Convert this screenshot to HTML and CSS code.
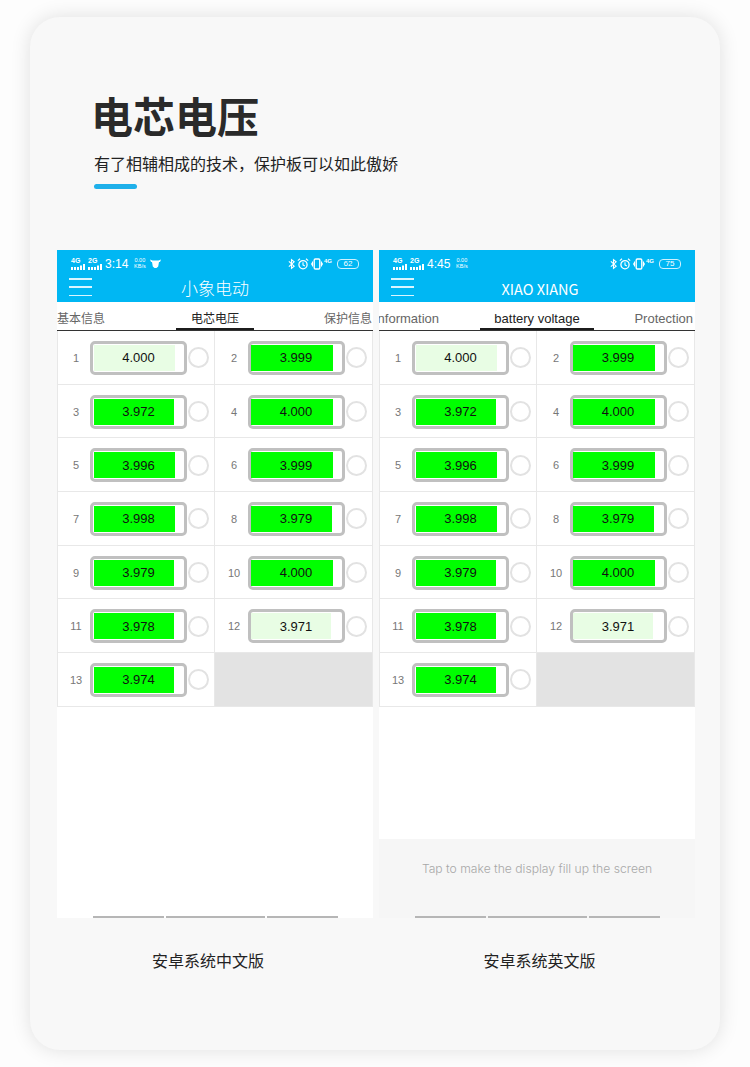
FILE: index.html
```html
<!DOCTYPE html>
<html lang="zh-CN">
<head>
    <meta charset="UTF-8">
    <meta name="viewport" content="width=device-width, initial-scale=1.0">
    <title>电芯电压</title>
    <link rel="stylesheet" href="styles.css">
</head>
<body>
    <svg class="icon-defs" width="0" height="0" xmlns="http://www.w3.org/2000/svg">
        <symbol id="signal-bars" viewBox="0 0 15 6">
            <path d="M0 3h2v3H0zM3 3h2v3H3zM6 3h2v3H6zM9 1.500h2V6H9zM12 0h2v6h-2z" fill="#fff"/>
        </symbol>
        <symbol id="bluetooth" viewBox="0 0 8 12">
            <path d="M1 3l6 5.500L4 11V1l3 2.500L1 9" fill="none" stroke="#fff" stroke-width="1.300"/>
        </symbol>
        <symbol id="alarm" viewBox="0 0 12 12">
            <circle cx="6" cy="6.700" r="4.100" fill="none" stroke="#fff" stroke-width="1.300"/>
            <path d="M6 4.200v2.700l1.800 1M.8 2.600L3 .8M11.200 2.600L9 .8" fill="none" stroke="#fff" stroke-width="1.100"/>
        </symbol>
        <symbol id="vibrate" viewBox="0 0 12 12">
            <rect x="3.200" y="1" width="5.600" height="10" rx="1.200" fill="none" stroke="#fff" stroke-width="1.400"/>
            <path d="M1.500 3.500v5M.2 4.800v2.400M10.500 3.500v5M11.800 4.800v2.400" fill="none" stroke="#fff"/>
        </symbol>
        <symbol id="mascot" viewBox="0 0 11 9">
            <path d="M0 .5l2.500 1h6L11 .5 10 3H9l-.8 4.500L6.500 9h-2L2.800 7.500 2 3H1z" fill="#fff"/>
        </symbol>
    </svg>

    <main class="card">
        <header class="intro">
            <h1>电芯电压</h1>
            <p>有了相辅相成的技术，保护板可以如此傲娇</p>
            <div class="intro-bar"></div>
        </header>

        <div class="phones">
            <section class="phone">
                <div class="app-head">
                    <div class="status">
                        <div class="status-group">
                            <span class="sig"><span class="sig-label">4G</span><svg class="sig-bars"><use href="#signal-bars"/></svg></span>
                            <span class="sig"><span class="sig-label">2G</span><svg class="sig-bars"><use href="#signal-bars"/></svg></span>
                            <span class="clock">3:14</span>
                            <span class="speed">0.00<br>KB/s</span>
                            <svg class="ico-mascot"><use href="#mascot"/></svg>
                        </div>
                        <div class="status-group">
                            <svg class="ico-bt"><use href="#bluetooth"/></svg>
                            <svg class="ico-12"><use href="#alarm"/></svg>
                            <svg class="ico-12 ico-vibe"><use href="#vibrate"/></svg>
                            <span class="net">4G</span>
                            <span class="batt">62</span>
                        </div>
                    </div>
                    <div class="app-bar">
                        <div class="burger"><i></i><i></i><i></i></div>
                        <div class="app-title">小象电动</div>
                    </div>
                </div>
                <div class="tabs">
                    <div class="tab">基本信息</div>
                    <div class="tab tab-active">电芯电压</div>
                    <div class="tab tab-end">保护信息</div>
                </div>
                <div class="cells">
                    <div class="cell"><span class="num">1</span><div class="cell-batt"><div class="fill low" style="width:81px"></div><span class="volt">4.000</span></div><span class="dot"></span></div>
                    <div class="cell"><span class="num">2</span><div class="cell-batt"><div class="fill" style="width:82px"></div><span class="volt">3.999</span></div><span class="dot"></span></div>
                    <div class="cell"><span class="num">3</span><div class="cell-batt"><div class="fill" style="width:80px"></div><span class="volt">3.972</span></div><span class="dot"></span></div>
                    <div class="cell"><span class="num">4</span><div class="cell-batt"><div class="fill" style="width:82px"></div><span class="volt">4.000</span></div><span class="dot"></span></div>
                    <div class="cell"><span class="num">5</span><div class="cell-batt"><div class="fill" style="width:81px"></div><span class="volt">3.996</span></div><span class="dot"></span></div>
                    <div class="cell"><span class="num">6</span><div class="cell-batt"><div class="fill" style="width:82px"></div><span class="volt">3.999</span></div><span class="dot"></span></div>
                    <div class="cell"><span class="num">7</span><div class="cell-batt"><div class="fill" style="width:81px"></div><span class="volt">3.998</span></div><span class="dot"></span></div>
                    <div class="cell"><span class="num">8</span><div class="cell-batt"><div class="fill" style="width:81px"></div><span class="volt">3.979</span></div><span class="dot"></span></div>
                    <div class="cell"><span class="num">9</span><div class="cell-batt"><div class="fill" style="width:80px"></div><span class="volt">3.979</span></div><span class="dot"></span></div>
                    <div class="cell"><span class="num">10</span><div class="cell-batt"><div class="fill" style="width:82px"></div><span class="volt">4.000</span></div><span class="dot"></span></div>
                    <div class="cell"><span class="num">11</span><div class="cell-batt"><div class="fill" style="width:80px"></div><span class="volt">3.978</span></div><span class="dot"></span></div>
                    <div class="cell"><span class="num">12</span><div class="cell-batt"><div class="fill low" style="width:80px"></div><span class="volt">3.971</span></div><span class="dot"></span></div>
                    <div class="cell"><span class="num">13</span><div class="cell-batt"><div class="fill" style="width:80px"></div><span class="volt">3.974</span></div><span class="dot"></span></div>
                    <div class="cell cell-empty"></div>
                </div>
                <div class="phone-foot">
                    <div class="home-bars"><i></i><i></i><i></i></div>
                </div>
            </section>

            <section class="phone phone-en">
                <div class="app-head">
                    <div class="status">
                        <div class="status-group">
                            <span class="sig"><span class="sig-label">4G</span><svg class="sig-bars"><use href="#signal-bars"/></svg></span>
                            <span class="sig"><span class="sig-label">2G</span><svg class="sig-bars"><use href="#signal-bars"/></svg></span>
                            <span class="clock">4:45</span>
                            <span class="speed">0.00<br>KB/s</span>
                        </div>
                        <div class="status-group">
                            <svg class="ico-bt"><use href="#bluetooth"/></svg>
                            <svg class="ico-12"><use href="#alarm"/></svg>
                            <svg class="ico-12 ico-vibe"><use href="#vibrate"/></svg>
                            <span class="net">4G</span>
                            <span class="batt">75</span>
                        </div>
                    </div>
                    <div class="app-bar">
                        <div class="burger"><i></i><i></i><i></i></div>
                        <div class="app-title">XIAO XIANG</div>
                    </div>
                </div>
                <div class="tabs">
                    <div class="tab tab-clip">Information</div>
                    <div class="tab tab-active">battery voltage</div>
                    <div class="tab tab-end">Protection</div>
                </div>
                <div class="cells">
                    <div class="cell"><span class="num">1</span><div class="cell-batt"><div class="fill low" style="width:81px"></div><span class="volt">4.000</span></div><span class="dot"></span></div>
                    <div class="cell"><span class="num">2</span><div class="cell-batt"><div class="fill" style="width:82px"></div><span class="volt">3.999</span></div><span class="dot"></span></div>
                    <div class="cell"><span class="num">3</span><div class="cell-batt"><div class="fill" style="width:80px"></div><span class="volt">3.972</span></div><span class="dot"></span></div>
                    <div class="cell"><span class="num">4</span><div class="cell-batt"><div class="fill" style="width:82px"></div><span class="volt">4.000</span></div><span class="dot"></span></div>
                    <div class="cell"><span class="num">5</span><div class="cell-batt"><div class="fill" style="width:81px"></div><span class="volt">3.996</span></div><span class="dot"></span></div>
                    <div class="cell"><span class="num">6</span><div class="cell-batt"><div class="fill" style="width:82px"></div><span class="volt">3.999</span></div><span class="dot"></span></div>
                    <div class="cell"><span class="num">7</span><div class="cell-batt"><div class="fill" style="width:81px"></div><span class="volt">3.998</span></div><span class="dot"></span></div>
                    <div class="cell"><span class="num">8</span><div class="cell-batt"><div class="fill" style="width:81px"></div><span class="volt">3.979</span></div><span class="dot"></span></div>
                    <div class="cell"><span class="num">9</span><div class="cell-batt"><div class="fill" style="width:80px"></div><span class="volt">3.979</span></div><span class="dot"></span></div>
                    <div class="cell"><span class="num">10</span><div class="cell-batt"><div class="fill" style="width:82px"></div><span class="volt">4.000</span></div><span class="dot"></span></div>
                    <div class="cell"><span class="num">11</span><div class="cell-batt"><div class="fill" style="width:80px"></div><span class="volt">3.978</span></div><span class="dot"></span></div>
                    <div class="cell"><span class="num">12</span><div class="cell-batt"><div class="fill low" style="width:80px"></div><span class="volt">3.971</span></div><span class="dot"></span></div>
                    <div class="cell"><span class="num">13</span><div class="cell-batt"><div class="fill" style="width:80px"></div><span class="volt">3.974</span></div><span class="dot"></span></div>
                    <div class="cell cell-empty"></div>
                </div>
                <div class="phone-foot">
                    <div class="tap-hint">Tap to make the display fill up the screen</div>
                    <div class="home-bars"><i></i><i></i><i></i></div>
                </div>
            </section>
        </div>

        <div class="captions">
            <div class="caption">安卓系统中文版</div>
            <div class="caption caption-en">安卓系统英文版</div>
        </div>
    </main>
</body>
</html>
```

FILE: styles.css
```css
:root {
    --blue: #00b7f3;
    --line: #e8e8e8;
    --cjk: "Noto Sans CJK SC", sans-serif;
    --latin: "Liberation Sans", "Noto Sans CJK SC", sans-serif;
}

body {
    margin: 0;
    padding: 17px 30px;
    background-color: #fdfdfd;
    font-family: var(--cjk);
    color: #222;
}

.icon-defs {
    display: block;
    height: 0;
}

.card {
    height: 1033px;
    box-sizing: border-box;
    padding: 78px 25px 0 27px;
    background-color: #f8f8f8;
    border-radius: 30px;
    box-shadow: 0 0 20px rgba(0, 0, 0, 0.12);
}

/* heading block */
.intro {
    padding-left: 37px;
    margin-bottom: 61px;
}

.intro h1 {
    margin: -1px 0 16px -3px;
    font-size: 42px;
    line-height: 41px;
    font-weight: 700;
    color: #2a2a2a;
}

.intro p {
    margin: 0 0 9px;
    font-size: 16px;
    line-height: 24px;
}

.intro-bar {
    width: 43px;
    height: 5px;
    border-radius: 3px;
    background-color: #1fb0ea;
}

/* phone screens */
.phones {
    display: flex;
    gap: 6px;
}

.phone {
    width: 316px;
    height: 668px;
    display: flex;
    flex-direction: column;
    background-color: #fff;
}

.app-head {
    height: 52px;
    background-color: var(--blue);
    color: #fff;
}

.status {
    height: 27px;
    padding: 0 14px;
    display: flex;
    justify-content: space-between;
    align-items: center;
}

.status-group {
    display: flex;
    align-items: center;
}

.sig {
    width: 15px;
    margin-right: 2px;
    display: flex;
    flex-direction: column;
    font-family: var(--latin);
}

.sig-label {
    height: 6px;
    font-size: 7px;
    line-height: 6px;
    font-weight: 700;
}

.sig-bars {
    width: 15px;
    height: 6px;
}

.clock {
    margin-left: 0;
    font-family: var(--latin);
    font-size: 12px;
    line-height: 14px;
}

.speed {
    margin-left: 4px;
    width: 15px;
    font-family: var(--latin);
    font-size: 5.500px;
    line-height: 5.500px;
    text-align: center;
}

.ico-mascot {
    width: 11px;
    height: 9px;
    margin-left: 3px;
}

.ico-bt {
    width: 7px;
    height: 12px;
    margin-right: 2px;
}

.ico-12 {
    width: 12px;
    height: 12px;
    margin-right: 2px;
}

.ico-vibe {
    margin-right: 1px;
}

.net {
    align-self: flex-start;
    margin-right: 5px;
    font-family: var(--latin);
    font-size: 6px;
    line-height: 7px;
    font-weight: 700;
}

.batt {
    width: 22px;
    height: 10px;
    box-sizing: border-box;
    border: 1px solid #cdf1ff;
    border-radius: 4px;
    font-family: var(--latin);
    font-size: 8px;
    line-height: 8px;
    text-align: center;
}

.app-bar {
    height: 25px;
    padding: 0 12px;
    display: grid;
    grid-template-columns: 1fr auto 1fr;
}

.burger {
    width: 23px;
    height: 18px;
    margin-top: 1px;
    display: flex;
    flex-direction: column;
    justify-content: space-between;
}

.burger i {
    display: block;
    height: 1.500px;
    background-color: #d9f5ff;
}

.app-title {
    font-size: 17px;
    line-height: 22px;
    font-weight: 300;
}

.phone-en .app-title {
    padding-left: 6px;
    font-size: 14.500px;
    font-weight: 400;
    line-height: 24px;
}

.tabs {
    height: 28px;
    margin-top: 1px;
    box-sizing: border-box;
    border-bottom: 1px solid #333;
    display: grid;
    grid-template-columns: 1fr auto 1fr;
    overflow: hidden;
}

.tab {
    padding-top: 7px;
    font-size: 12px;
    line-height: 16px;
    color: #666;
    white-space: nowrap;
}

.phone-en .tab {
    padding-top: 8px;
    font-family: var(--latin);
    font-size: 13px;
}

.tab-clip {
    margin-left: -5px;
}

.tab-end {
    padding-right: 1px;
    text-align: right;
}

.phone-en .tab-end {
    padding-right: 2px;
}

.tab.tab-active {
    box-sizing: border-box;
    height: 27px;
    padding-left: 14.500px;
    padding-right: 14.500px;
    border-bottom: 2px solid #1c1c1c;
    color: #222;
}

.cells {
    display: grid;
    grid-template-columns: 158px 158px;
    grid-auto-rows: 53.700px;
}

.phone-en .cells {
    padding-bottom: 132px;
}

.cell {
    box-sizing: border-box;
    padding-top: 1px;
    display: flex;
    align-items: center;
    border-bottom: 1px solid var(--line);
    border-right: 1px solid var(--line);
}

.cell:nth-child(odd) {
    border-left: 1px solid var(--line);
}

.cell-empty {
    background-color: #e3e3e3;
}

.num {
    width: 24px;
    margin: 0 2px 0 7px;
    font-family: var(--latin);
    font-size: 11px;
    color: #777;
    text-align: center;
}

.cell:nth-child(odd) .num {
    margin-left: 6px;
}

.cell-batt {
    width: 97px;
    height: 34px;
    box-sizing: border-box;
    padding: 1px;
    border: 3px solid #c0c0c0;
    border-radius: 5px;
    background-color: #fff;
    display: grid;
    align-items: center;
}

.cell:nth-child(even) .cell-batt {
    padding-left: 0;
}

.fill,
.volt {
    grid-area: 1 / 1;
}

.fill {
    height: 26px;
    background-color: #00ff00;
}

.fill.low {
    background-color: #e8fde4;
}

.volt {
    padding-top: 1px;
    font-family: var(--latin);
    font-size: 13px;
    line-height: 16px;
    color: #111;
    text-align: center;
}

.dot {
    width: 21px;
    height: 21px;
    margin-left: 1px;
    box-sizing: border-box;
    border: 2px solid #e2e2e2;
    border-radius: 50%;
}

.phone-foot {
    flex: 1;
    display: flex;
    flex-direction: column;
    justify-content: flex-end;
}

.phone-en .phone-foot {
    background-color: #f6f6f6;
}

.tap-hint {
    margin-bottom: 38px;
    font-family: Inter, sans-serif;
    font-size: 12.150px;
    font-weight: 300;
    line-height: 18px;
    color: #a8a8a8;
    text-align: center;
}

.home-bars {
    padding-left: 36px;
    display: flex;
    gap: 2px;
}

.home-bars i {
    display: block;
    width: 71px;
    height: 2px;
    background-color: #b6b6b6;
}

.home-bars i:nth-child(2) {
    width: 99px;
}

/* labels under the phones */
.captions {
    margin-top: 30px;
    display: flex;
    gap: 6px;
}

.caption {
    width: 316px;
    box-sizing: border-box;
    padding-right: 14px;
    font-size: 16px;
    line-height: 24px;
    text-align: center;
}

.caption-en {
    padding: 0 0 0 5px;
}
```
